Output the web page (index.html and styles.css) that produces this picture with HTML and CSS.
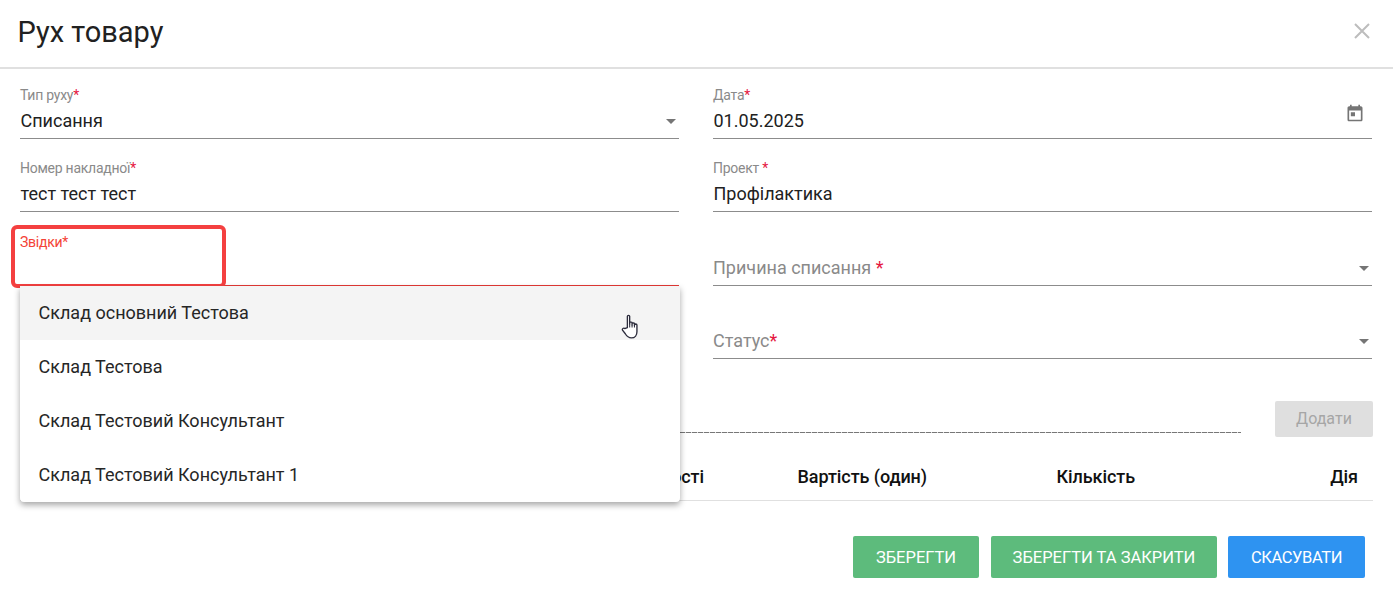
FILE: index.html
```html
<!DOCTYPE html>
<html lang="uk">
<head>
<meta charset="utf-8">
<title>Рух товару</title>
<link rel="stylesheet" href="styles.css">
</head>
<body>
<div class="dialog">
  <header class="head">
    <h1 class="title">Рух товару</h1>
    <svg class="close" viewBox="0 0 16 16" width="16" height="16"><path d="M1 1 15 15M15 1 1 15" stroke="#bdbdbd" stroke-width="2" fill="none"/></svg>
  </header>
  <div class="form">
    <div class="field">
      <label class="lab small">Тип руху<i>*</i></label>
      <div class="val">Списання</div>
      <span class="caret"></span>
    </div>
    <div class="field">
      <label class="lab small">Дата<i>*</i></label>
      <div class="val">01.05.2025</div>
      <svg class="cal" viewBox="0 0 24 24" width="20" height="20"><path fill="#757575" d="M19 4h-1V2h-2v2H8V2H6v2H5c-1.100 0-2 .9-2 2v14c0 1.100.9 2 2 2h14c1.100 0 2-.9 2-2V6c0-1.100-.9-2-2-2zm0 16H5V9h14v11zM7 11h5v5H7z"/></svg>
    </div>
    <div class="field">
      <label class="lab small">Номер накладної<i>*</i></label>
      <div class="val">тест тест тест</div>
    </div>
    <div class="field">
      <label class="lab small">Проект <i>*</i></label>
      <div class="val">Профілактика</div>
    </div>
    <div class="field tall error">
      <label class="lab small">Звідки<i>*</i></label>
      <div class="val"></div>
    </div>
    <div class="field tall">
      <label class="lab big">Причина списання <i>*</i></label>
      <div class="val"></div>
      <span class="caret"></span>
    </div>
    <div class="field">
      <div class="val"></div>
    </div>
    <div class="field">
      <label class="lab big">Статус<i>*</i></label>
      <div class="val"></div>
      <span class="caret"></span>
    </div>
  </div>
  <div class="addrow">
    <div class="dashed"></div>
    <button class="add" type="button">Додати</button>
  </div>
  <div class="thead">
    <div></div>
    <div>Загальна вартості</div>
    <div>Вартість (один)</div>
    <div>Кількість</div>
    <div>Дія</div>
  </div>
  <footer class="foot">
    <button class="btn green" type="button">Зберегти</button>
    <button class="btn green" type="button">Зберегти та закрити</button>
    <button class="btn blue" type="button">Скасувати</button>
  </footer>
</div>
<div class="annot"></div>
<ul class="menu">
  <li class="hover">Склад основний Тестова</li>
  <li>Склад Тестова</li>
  <li>Склад Тестовий Консультант</li>
  <li>Склад Тестовий Консультант 1</li>
</ul>
<svg class="hand" viewBox="0 0 18 26" width="19" height="27"><path d="M6 14V3.200C6 2 8.200 2 8.200 3.200V10.500V9.500C8.200 8.500 10.500 8.500 10.500 9.500V11.500V10.300C10.500 9.300 12.800 9.300 12.800 10.300V12V11.300C12.800 10.300 15.200 10.300 15.200 11.500V18C15.200 21 13.500 24 9.800 24C6.500 24 5.500 22.500 4 20L1.300 16.500C.6 15.300 2.300 13.800 3.500 15Z" fill="#fff" stroke="#2c2c3c" stroke-width="1.300" stroke-linejoin="round"/><path d="M8.200 10.500V14M10.500 11.500V14M12.800 12V14" stroke="#2c2c3c" stroke-width="1" fill="none"/></svg>
</body>
</html>
```
FILE: styles.css
```css
* { box-sizing: border-box; }
html, body { margin: 0; height: 100%; overflow: hidden; background: #fff; }
body { position: relative; font-family: Roboto, "Liberation Sans", sans-serif; color: #212121; }
.dialog { display: flex; flex-direction: column; height: 591px; }
.head { height: 69px; flex: none; display: flex; align-items: center; justify-content: space-between; padding: 0 23px 4px 17.500px; border-bottom: 2px solid #e0e0e0; }
.title { margin: 0; font-size: 29px; font-weight: 400; line-height: 40px; }
.close { display: block; margin-top: -1px; }
.form { display: grid; grid-template-columns: 659px 659px; column-gap: 34px; padding: 0 0 0 20px; }
.field { position: relative; height: 73px; border-bottom: 1px solid #8c8c8c; }
.field:nth-child(-n+2) { height: 70px; }
.tall { height: 74px; }
.lab { position: absolute; left: 0; color: #8a8a8a; }
.lab i { font-style: normal; color: #e5173f; }
.small { top: 21px; font-size: 14px; line-height: 16px; letter-spacing: -.25px; }
.field:nth-child(-n+2) .small { top: 18px; }
.tall .small { top: 22px; }
.big { top: 44px; font-size: 18px; line-height: 22px; }
.tall .big { top: 45px; }
.val { position: absolute; left: .500px; bottom: 5px; font-size: 18px; line-height: 24px; color: #212121; }
.caret { position: absolute; right: 3px; bottom: 14px; width: 0; height: 0; border-left: 5.500px solid transparent; border-right: 5.500px solid transparent; border-top: 5.500px solid #757575; }
.cal { position: absolute; right: 7px; top: 34px; }
.error { border-bottom-color: #e53935; }
.error .small { color: #f44336; }
.error .small i { color: #f44336; }
.addrow { display: flex; align-items: flex-start; justify-content: space-between; padding: 42px 20px 0 20px; height: 79px; }
.dashed { width: 1221px; height: 1px; margin-top: 31px; background: repeating-linear-gradient(90deg, #777 0 5px, #e0e0e0 5px 6px); }
.add { width: 98px; height: 36px; border: 0; border-radius: 2px; background: #dfdfdf; color: #a6a6a6; font: 400 16px Roboto, sans-serif; padding: 0 0 2px; }
.thead { margin: 20px 20px 0; height: 43px; display: grid; grid-template-columns: 300px 384px 223px 208px 223px; align-items: center; padding-bottom: 5px; font-size: 18px; font-weight: 500; color: #111; border-bottom: 1px solid #e0e0e0; text-align: right; letter-spacing: -.08px; }
.foot { display: flex; justify-content: flex-end; gap: 12px; padding: 35px 28px 0 0; }
.btn { height: 42px; border: 0; border-radius: 2px; color: #fff; font: 400 16.500px Roboto, sans-serif; text-transform: uppercase; padding: 0; }
.btn:nth-child(1) { width: 126px; }
.btn:nth-child(2) { width: 226px; margin-right: -1px; }
.btn:nth-child(3) { width: 137px; letter-spacing: -.4px; }
.green { background: #5dbb7c; }
.blue { background: #2e93f1; }
.annot { position: absolute; left: 11px; top: 225px; width: 215px; height: 63px; border: 4px solid #f44040; border-radius: 6px; }
.menu { position: absolute; left: 20px; top: 286px; width: 660px; height: 216px; margin: 0; padding: 0; list-style: none; background: #fff; border-radius: 0 0 4px 4px; box-shadow: 0 3px 6px rgba(0,0,0,.35); }
.menu li { height: 54px; padding-left: 18.500px; font-size: 18px; line-height: 54px; color: #262626; }
.menu .hover { background: #f4f4f4; }
.hand { position: absolute; left: 621px; top: 313px; }
```
